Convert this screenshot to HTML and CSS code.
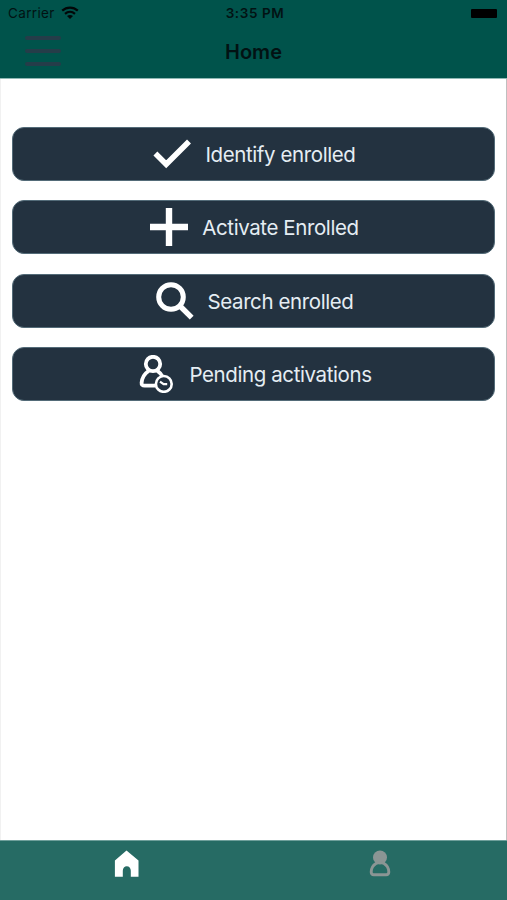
FILE: index.html
```html
<!DOCTYPE html>
<html lang="en">
<head>
    <meta charset="UTF-8">
    <meta name="viewport" content="width=device-width, initial-scale=1.0">
    <title>Home</title>
    <link rel="stylesheet" href="styles.css">
</head>
<body>
    <header class="header">
        <div class="status-bar">
            <div class="carrier">
                <span>Carrier</span>
                <svg class="wifi" viewBox="0 0 18 13">
                    <path d="M1.2 4.6C5.7 .5 12.3 .5 16.8 4.6M4 7.8c3-2.6 7-2.6 10 0" fill="none" stroke="currentColor" stroke-width="2.2"/>
                    <path d="M6 10.1c1.9-1.5 4.1-1.5 6 0L9 13z" fill="currentColor"/>
                </svg>
            </div>
            <span class="time">3:35 PM</span>
            <div class="battery"></div>
        </div>
        <div class="nav-bar">
            <button class="menu" aria-label="Menu">
                <span></span>
                <span></span>
                <span></span>
            </button>
            <h1 class="title">Home</h1>
        </div>
    </header>

    <main class="content">
        <button class="action">
            <svg class="icon" viewBox="0 0 38 38"><path d="M2.4 18.6l10.8 10.6L36 6.4" fill="none" stroke="currentColor" stroke-width="5.6"/></svg>
            <span class="label">Identify enrolled</span>
        </button>
        <button class="action">
            <svg class="icon" viewBox="0 0 38 38"><path d="M19 0v38M0 19h38" fill="none" stroke="currentColor" stroke-width="6.4"/></svg>
            <span class="label">Activate Enrolled</span>
        </button>
        <button class="action">
            <svg class="icon" viewBox="0 0 38 38">
                <circle cx="15" cy="15" r="12.3" fill="none" stroke="currentColor" stroke-width="5"/>
                <path d="M23.5 23.5l12.2 12.2" stroke="currentColor" stroke-width="5.4"/>
            </svg>
            <span class="label">Search enrolled</span>
        </button>
        <button class="action">
            <svg class="icon" viewBox="0 0 38 38">
                <g fill="none" stroke="currentColor" stroke-width="3.8">
                    <circle cx="16" cy="9" r="7.2"/>
                    <path d="M18.6 30.6H7.6c-2.2 0-3.2-1-3-2.8.5-5 2.7-9 7-11.8M20.4 15.8c2.2 1.4 4 3.4 5.2 6"/>
                    <circle cx="26.8" cy="28.9" r="7.9" stroke-width="2.6"/>
                    <path d="M23 26.6l3.6 2.6h3.6" stroke-width="2.2"/>
                </g>
            </svg>
            <span class="label">Pending activations</span>
        </button>
    </main>

    <nav class="tab-bar">
        <a class="tab active" aria-label="Home">
            <svg class="tab-icon" viewBox="0 0 26 28"><path d="M12.5 .6L24.5 10.6v16.2h-7.7v-6c0-2.8-1.7-4.6-4-4.6s-4 1.8-4 4.6v6H.9V10.6z" fill="currentColor"/></svg>
        </a>
        <a class="tab" aria-label="Profile">
            <svg class="tab-icon" viewBox="0 0 26 28">
                <circle cx="13" cy="7.4" r="7" fill="currentColor"/>
                <path d="M9 13.5c-3 1.8-4.8 4.8-4.8 8.6 0 1.8.8 2.7 2.6 2.7h12.4c1.8 0 2.6-.9 2.6-2.7 0-3.8-1.8-6.8-4.8-8.6q-4-2-8 0z" fill="none" stroke="currentColor" stroke-width="2.9"/>
            </svg>
        </a>
    </nav>
</body>
</html>
```

FILE: styles.css
```css
* {
    box-sizing: border-box;
}

body {
    display: flex;
    flex-direction: column;
    height: 100vh;
    margin: 0;
    background: #fff;
    font-family: Inter, 'Liberation Sans', sans-serif;
    overflow: hidden;
}

button {
    padding: 0;
    border: none;
    font-family: inherit;
    cursor: pointer;
}

.header {
    height: 79px;
    background: #00534b;
    border-bottom: 1px solid #8fb9b5;
    color: #021213;
}

.status-bar {
    display: grid;
    grid-template-columns: 1fr auto 1fr;
    align-items: center;
    height: 26px;
    padding: 0 10px 0 8px;
    font-size: 13.5px;
}

.carrier {
    display: flex;
    align-items: center;
    gap: 6px;
    letter-spacing: 0.35px;
}

.wifi {
    width: 18px;
    height: 13px;
    margin-bottom: 2px;
    color: #020708;
}

.time {
    padding-left: 5px;
    font-size: 13.5px;
    font-weight: 600;
    letter-spacing: 0.6px;
}

.battery {
    justify-self: end;
    width: 26px;
    height: 9px;
    border-radius: 1px;
    background: #000;
}

.nav-bar {
    display: grid;
    grid-template-columns: 1fr auto 1fr;
    align-items: center;
    height: 51px;
}

.menu {
    display: flex;
    flex-direction: column;
    gap: 9px;
    width: 36px;
    margin: 0 0 2px 25px;
    background: none;
}

.menu span {
    height: 4px;
    border-radius: 2px;
    background: #253d49;
}

.title {
    margin: 0;
    font-size: 20px;
    font-weight: 600;
}

.content {
    display: flex;
    flex: 1;
    flex-direction: column;
    gap: 19.4px;
    padding: 48px 11px 0;
    border-left: 1px solid #f1f1f1;
    border-right: 1px solid #bfbfbf;
}

.action {
    display: flex;
    justify-content: center;
    align-items: center;
    gap: 14px;
    height: 54px;
    padding-left: 2px;
    border: 1px solid #536b78;
    border-radius: 12px;
    background: #233240;
    color: #fff;
}

.icon {
    width: 38px;
    height: 38px;
}

.label {
    padding-top: 1px;
    color: #e5edf3;
    font-size: 20.5px;
    letter-spacing: -0.4px;
    white-space: nowrap;
}

.tab-bar {
    display: flex;
    height: 60px;
    border-top: 1px solid #6f9f9b;
    background: #266b64;
}

.tab {
    display: flex;
    flex: 1;
    justify-content: center;
    padding-top: 9px;
    color: #8b9594;
}

.tab.active {
    color: #fff;
}

.tab-icon {
    width: 26px;
    height: 28px;
}
```
